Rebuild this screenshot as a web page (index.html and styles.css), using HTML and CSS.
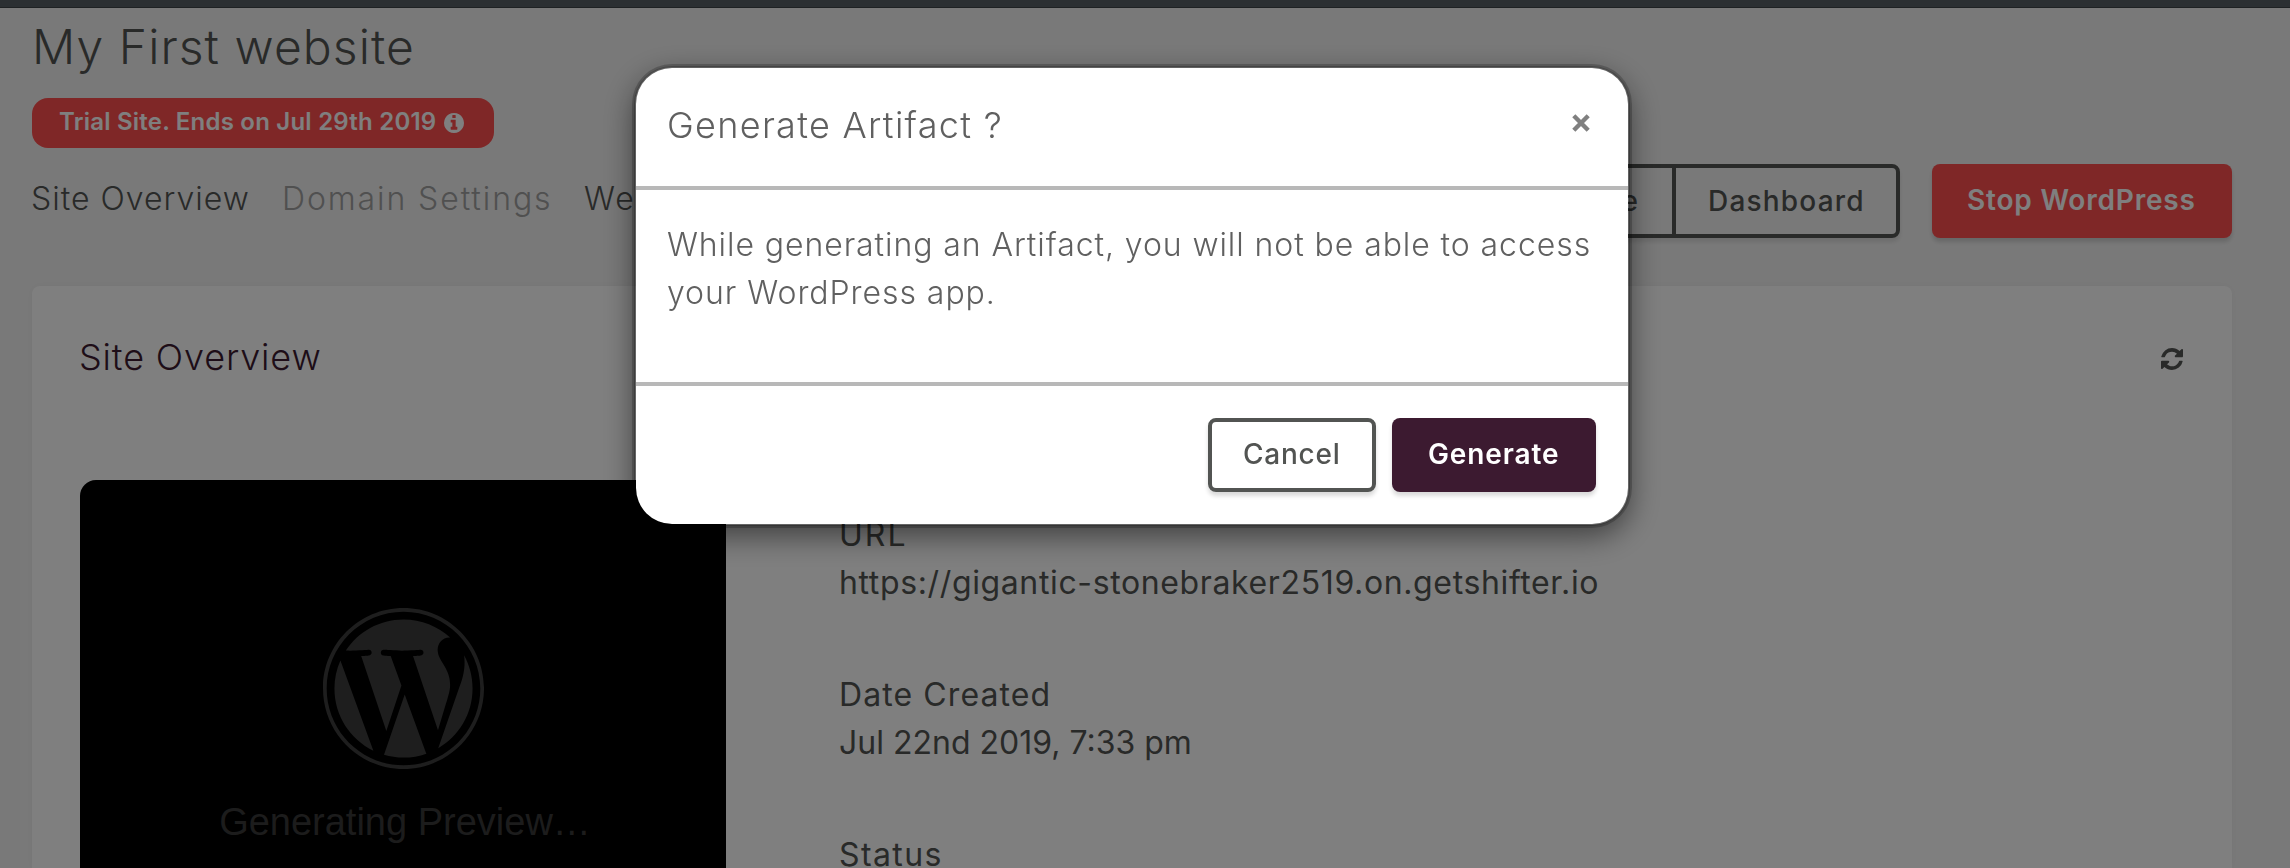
FILE: index.html
```html
<!DOCTYPE html>
<html lang="en">
<head>
<meta charset="utf-8">
<title>My First website</title>
<link rel="stylesheet" href="styles.css">
</head>
<body>
<div class="topbar"></div>
<main class="page">
  <h1 class="site-name"><span>My First website</span></h1>
  <div class="trial"><span class="trial-text">Trial Site. Ends on Jul 29th 2019</span>
    <svg class="trial-icon" viewBox="128 128 1536 1536"><path d="M1152 1376v-160q0-14-9-23t-23-9h-96v-512q0-14-9-23t-23-9h-320q-14 0-23 9t-9 23v160q0 14 9 23t23 9h96v320h-96q-14 0-23 9t-9 23v160q0 14 9 23t23 9h448q14 0 23-9t9-23zm-128-896v-160q0-14-9-23t-23-9h-192q-14 0-23 9t-9 23v160q0 14 9 23t23 9h192q14 0 23-9t9-23zm640 416q0 209-103 385.5t-279.5 279.5-385.5 103-385.5-103-279.5-279.5-103-385.5 103-385.5 279.5-279.5 385.5-103 385.5 103 279.5 279.5 103 385.5z"/></svg>
  </div>
  <div class="toolbar">
    <nav class="tabs">
      <a class="tab tab-overview">Site Overview</a>
      <a class="tab tab-domain">Domain Settings</a>
      <a class="tab tab-web">We</a>
    </nav>
    <div class="actions">
      <div class="group">
        <span class="group-item group-first">e</span>
        <span class="group-item group-last">Dashboard</span>
      </div>
      <span class="btn btn-stop">Stop WordPress</span>
    </div>
  </div>
  <section class="card">
    <header class="card-head">
      <h2 class="card-title">Site Overview</h2>
      <svg class="refresh" viewBox="0 0 1536 1536"><path d="M1511 928q0 5-1 7-64 268-268 434.500t-478 166.500q-146 0-282.500-55t-243.500-157l-129 129q-19 19-45 19t-45-19-19-45v-448q0-26 19-45t45-19h448q26 0 45 19t19 45-19 45l-137 137q71 66 161 102t187 36q134 0 250-65t186-179q11-17 53-117 8-23 30-23h192q13 0 22.500 9.500t9.500 22.500zm25-800v448q0 26-19 45t-45 19h-448q-26 0-45-19t-19-45 19-45l138-138q-148-137-349-137-134 0-250 65t-186 179q-11 17-53 117-8 23-30 23h-199q-13 0-22.500-9.500t-9.500-22.500v-7q65-268 270-434.500t480-166.500q146 0 284 55.500t245 156.500l130-129q19-19 45-19t45 19 19 45z"/></svg>
    </header>
    <div class="card-body">
      <div class="preview">
        <svg class="wp" viewBox="0 0 122.52 122.523">
          <path d="m8.708 61.26c0 20.802 12.089 38.779 29.619 47.298l-25.069-68.686c-2.916 6.536-4.55 13.769-4.55 21.388z"/>
          <path d="m96.74 58.608c0-6.495-2.333-10.993-4.334-14.494-2.664-4.329-5.161-7.995-5.161-12.324 0-4.831 3.664-9.328 8.825-9.328.233 0 .454.029.681.042-9.35-8.566-21.807-13.796-35.489-13.796-18.36 0-34.513 9.42-43.91 23.688 1.233.037 2.395.063 3.382.063 5.497 0 14.006-.667 14.006-.667 2.833-.167 3.167 3.994.337 4.329 0 0-2.847.335-6.015.501l19.138 56.925 11.501-34.493-8.188-22.434c-2.83-.166-5.511-.501-5.511-.501-2.832-.166-2.5-4.496.332-4.329 0 0 8.679.667 13.843.667 5.496 0 14.006-.667 14.006-.667 2.835-.167 3.168 3.994.337 4.329 0 0-2.853.335-6.015.501l18.992 56.494 5.242-17.517c2.272-7.269 4.001-12.49 4.001-16.989z"/>
          <path d="m62.184 65.857-15.768 45.819c4.708 1.384 9.687 2.141 14.846 2.141 6.12 0 11.989-1.058 17.452-2.979-.141-.225-.269-.464-.374-.724z"/>
          <path d="m107.376 36.046c.226 1.674.354 3.471.354 5.404 0 5.333-.996 11.328-3.996 18.824l-16.053 46.413c15.624-9.111 26.133-26.038 26.133-45.426.001-9.137-2.333-17.729-6.438-25.215z"/>
          <path d="m61.262 0c-33.779 0-61.262 27.481-61.262 61.26 0 33.783 27.483 61.263 61.262 61.263 33.778 0 61.265-27.48 61.265-61.263-.001-33.779-27.487-61.26-61.265-61.26zm0 119.715c-32.23 0-58.453-26.223-58.453-58.455 0-32.23 26.222-58.451 58.453-58.451 32.229 0 58.45 26.221 58.45 58.451 0 32.232-26.221 58.455-58.45 58.455z"/>
        </svg>
        <span class="preview-text">Generating Preview…</span>
      </div>
      <dl class="info">
        <div class="row"><dt class="t-url">URL</dt><dd class="t-link">https://gigantic-stonebraker2519.on.getshifter.io</dd></div>
        <div class="row"><dt class="t-date">Date Created</dt><dd class="t-time">Jul 22nd 2019, 7:33 pm</dd></div>
        <div class="row"><dt class="t-status">Status</dt></div>
      </dl>
    </div>
  </section>
</main>
<div class="backdrop">
  <div class="modal">
    <header class="modal-head">
      <h2 class="modal-title">Generate Artifact ?</h2>
      <svg class="close" viewBox="0 0 18 18"><path d="M1.800 1.800L16.200 16.200M16.200 1.800L1.800 16.200"/></svg>
    </header>
    <div class="modal-body"><span class="m-line1">While generating an Artifact, you will not be able to access</span><br><span class="m-line2">your WordPress app.</span></div>
    <footer class="modal-foot">
      <span class="btn btn-cancel">Cancel</span>
      <span class="btn btn-generate">Generate</span>
    </footer>
  </div>
</div>
</body>
</html>
```

FILE: styles.css
```css
* { box-sizing: border-box; }
html, body { margin: 0; height: 868px; overflow: hidden; }
body { background: #f3f3f3; color: #525452; font-family: Inter, "Open Sans", sans-serif; font-weight: 300; font-size: 32px; line-height: 48px; white-space: nowrap; }
h1, h2, dl, dt, dd { margin: 0; font-weight: inherit; }
.topbar { height: 8px; background: #565e64; border-bottom: 1px solid #3c4246; }
.page { height: 860px; padding: 0 58px 0 32px; overflow: hidden; }
.site-name { height: 90px; padding-top: 9px; font-size: 48px; line-height: 60px; letter-spacing: 1.08px; }
.trial { display: flex; align-items: center; gap: 8px; width: 462px; height: 50px; padding: 0 27px; border-radius: 16px; background: #ff4e4e; color: #fff; font-size: 24px; font-weight: 600; line-height: 50px; }
.trial-text { width: 377px; height: 50px; line-height: 48px; letter-spacing: .22px; }
.trial-icon { width: 20px; height: 20px; fill: #fff; }
.toolbar { display: flex; justify-content: space-between; height: 138px; padding-top: 16px; }
.tabs { display: flex; gap: 34px; padding-top: 11px; }
.tab { width: 217px; margin-left: -1px; margin-right: 1px; letter-spacing: 1px; }
.tab-domain { width: 268px; color: #a0a0a0; letter-spacing: 1.9px; }
.tab-web { width: 60px; letter-spacing: 2px; }
.actions { display: flex; gap: 32px; height: 74px; }
.group { display: flex; border: 4px solid #525452; border-radius: 8px; box-shadow: 0 4px 4px rgba(0,0,0,.1); color: #525452; font-size: 28px; font-weight: 500; line-height: 66px; }
.group-first { width: 60px; padding-right: 34px; text-align: right; border-right: 4px solid #525452; }
.group-last { width: 220px; padding-left: 32px; letter-spacing: 1.2px; }
.btn { height: 74px; border-radius: 8px; box-shadow: 0 4px 4px rgba(0,0,0,.15); font-size: 28px; font-weight: 500; line-height: 72px; }
.btn-stop { width: 300px; padding-left: 35px; background: #ff4e4e; color: #fff; font-weight: 600; letter-spacing: .8px; }
.card { height: 582px; border-radius: 8px 8px 0 0; background: #fff; padding: 48px 48px 0; box-shadow: 0 0 8px rgba(0,0,0,.04); }
.card-head { display: flex; justify-content: space-between; height: 146px; padding-right: 1px; color: #3c1a30; }
.card-title { margin: -1px 0 0 -1px; font-size: 36px; line-height: 48px; letter-spacing: .85px; }
.refresh { width: 22px; height: 22px; margin-top: 14px; fill: #525452; }
.card-body { display: flex; gap: 113px; height: 388px; }
.preview { display: flex; flex-direction: column; align-items: center; width: 646px; padding-top: 128px; border-radius: 16px 0 0 0; background: #000; }
.wp { flex: none; width: 161px; height: 161px; fill: #3c3c3c; }
.preview-text { margin: 25px 0 0 4px; color: #383838; font-family: "Liberation Sans", Arial, sans-serif; font-size: 38px; font-weight: 400; line-height: 56px; }
.info { display: flex; flex-direction: column; gap: 64px; padding-top: 31px; font-weight: 400; }
.t-url { letter-spacing: 2px; }
.t-link { letter-spacing: .63px; }
.t-date { letter-spacing: 1.1px; }
.t-status { letter-spacing: 1.4px; }
.backdrop { position: fixed; inset: 0; padding-top: 66px; background: rgba(0,0,0,.5); }
.modal { width: 996px; height: 460px; margin-left: 634px; border: 2px solid rgba(0,0,0,.2); border-radius: 38px; background: #fff; background-clip: padding-box; box-shadow: 0 0 0 2px rgba(0,0,0,.2), 0 10px 30px rgba(0,0,0,.5); color: #606060; }
.modal-head { display: flex; justify-content: space-between; height: 122px; padding: 32px 38px 0 31px; border-bottom: 4px solid #b8b8b8; }
.modal-title { font-size: 36px; line-height: 50px; letter-spacing: 1.3px; }
.close { width: 18px; height: 18px; margin-top: 14px; fill: none; stroke: #808080; stroke-width: 4.4; }
.modal-body { height: 192px; padding: 31px 31px 0; }
.m-line1 { letter-spacing: .92px; }
.m-line2 { letter-spacing: .95px; }
.modal-foot { display: flex; justify-content: flex-end; gap: 16px; height: 142px; padding: 32px 32px 0; border-top: 4px solid #b8b8b8; }
.btn-cancel { width: 168px; padding-left: 31px; border: 4px solid #525452; color: #525452; line-height: 64px; letter-spacing: .75px; }
.btn-generate { width: 204px; padding-left: 36px; background: #3c1a30; color: #fff; font-weight: 600; letter-spacing: .9px; }
```
